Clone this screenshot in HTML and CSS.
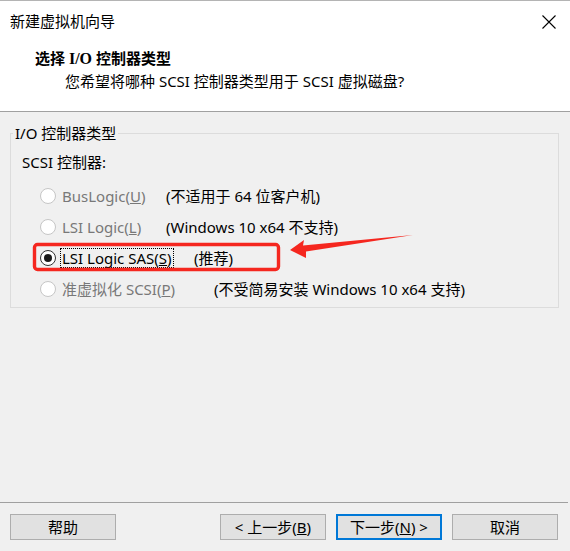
FILE: index.html
```html
<!DOCTYPE html>
<html lang="zh-CN">
<head>
  <meta charset="UTF-8" />
  <title>新建虚拟机向导</title>
  <link rel="stylesheet" href="styles.css">
</head>
<body>
  <div class="window">
    <div class="header">
      <div class="titlebar">
        <span>新建虚拟机向导</span>
        <svg class="close" width="14" height="14" viewBox="0 0 14 14">
          <path d="M0.5 0.5 L13.5 13.5 M13.5 0.5 L0.5 13.5" stroke="#000" stroke-width="1.1" fill="none" />
        </svg>
      </div>
      <h1>选择 <span class="serif">I/O</span> 控制器类型</h1>
      <p class="subtitle">您希望将哪种 SCSI 控制器类型用于 SCSI 虚拟磁盘?</p>
    </div>

    <div class="main">
      <fieldset class="group">
        <legend>I/O 控制器类型</legend>
        <div class="group-label">SCSI 控制器:</div>

        <div class="option disabled">
          <span class="radio"></span>
          <span class="choice w1"><span class="label">BusLogic(<u>U</u>)</span></span>
          <span class="desc">(不适用于 64 位客户机)</span>
        </div>
        <div class="option disabled">
          <span class="radio"></span>
          <span class="choice w1"><span class="label">LSI Logic(<u>L</u>)</span></span>
          <span class="desc">(Windows 10 x64 不支持)</span>
        </div>
        <div class="option">
          <span class="radio checked"></span>
          <span class="choice w2"><span class="label focus">LSI Logic SAS(<u>S</u>)</span></span>
          <span class="desc">(推荐)</span>
        </div>
        <div class="option disabled">
          <span class="radio"></span>
          <span class="choice w3"><span class="label">准虚拟化 SCSI(<u>P</u>)</span></span>
          <span class="desc">(不受简易安装 Windows 10 x64 支持)</span>
        </div>
      </fieldset>
    </div>

    <div class="footer">
      <button class="btn">帮助</button>
      <div class="nav">
        <button class="btn">&lt; 上一步(<u>B</u>)</button>
        <button class="btn default">下一步(<u>N</u>) &gt;</button>
        <button class="btn">取消</button>
      </div>
    </div>

    <!-- annotation drawn over the dialog -->
    <svg class="markup" width="570" height="551" viewBox="0 0 570 551">
      <rect x="34.5" y="244.5" width="244" height="25" rx="3" fill="none" stroke="#f5271f" stroke-width="3.4" />
      <polygon points="290,250 304,240 303,245.5 413,235 306,251.5 306,258" fill="#f5271f" />
    </svg>
  </div>
</body>
</html>
```

FILE: styles.css
```css
body {
  margin: 0;
  font-family: "Noto Sans", "Noto Sans CJK SC", sans-serif;
  font-size: 15px;
  color: #000;
}

.window {
  position: relative;
  width: 570px;
  height: 551px;
  background: #f0f0f0;
  display: flex;
  flex-direction: column;
}

.header {
  height: 110px;
  background: #fff;
  border-top: 1px solid #b4b4b4;
  border-bottom: 1px solid #a0a0a0;
}

.titlebar {
  height: 40px;
  line-height: 40px;
  padding: 0 14px 0 10px;
  display: flex;
  justify-content: space-between;
  align-items: center;
}

.close {
  margin-top: 2px;
}

h1 {
  margin: 7px 0 0 35px;
  font-size: 15px;
  line-height: 20px;
  font-weight: bold;
}

.serif {
  font-family: "Liberation Serif", serif;
  font-size: 16px;
}

.subtitle {
  margin: 2px 0 0 65px;
  line-height: 20px;
}

.main {
  flex: 1;
}

.group {
  margin: 11px 11px 0 10px;
  padding: 0 0 3px 2px;
  border: 1px solid #dcdcdc;
}

.group legend {
  padding: 0 2px;
  line-height: 20px;
}

.group-label {
  margin: 9px 0 8px 9px;
  line-height: 20px;
}

.option {
  height: 31px;
  display: flex;
  align-items: center;
  margin-left: 27px;
}

.radio {
  width: 14px;
  height: 14px;
  border: 1px solid #333;
  border-radius: 50%;
  background: #fff;
  margin-right: 4px;
  display: flex;
  align-items: center;
  justify-content: center;
}

.disabled .radio {
  border-color: #c6c6c6;
}

.radio.checked::after {
  content: "";
  width: 8px;
  height: 8px;
  border-radius: 50%;
  background: #1a1a1a;
}

.choice {
  flex-shrink: 0;
}

.choice.w1 { width: 106px; }
.choice.w2 { width: 134px; }
.choice.w3 { width: 154px; }

.label {
  display: inline-block;
  padding: 0 1px;
  line-height: 18px;
  border: 1px dotted transparent;
}

.disabled .label {
  color: #787878;
}

.label.focus {
  border-color: #000;
}

.desc {
  white-space: nowrap;
}

.footer {
  height: 37px;
  border-top: 1px solid #a0a0a0;
  margin-right: 2px;
  padding: 11px 10px 0 10px;
  display: flex;
  align-items: flex-start;
}

.nav {
  margin-left: auto;
  display: flex;
  gap: 10px;
}

.btn {
  box-sizing: border-box;
  width: 106px;
  height: 26px;
  padding: 0;
  font-family: inherit;
  font-size: 15px;
  line-height: 22px;
  color: #000;
  background: #e1e1e1;
  border: 1px solid #adadad;
}

.btn.default {
  border: 2px solid #0078d7;
}

.markup {
  position: absolute;
  top: 0;
  left: 0;
  pointer-events: none;
}
```
